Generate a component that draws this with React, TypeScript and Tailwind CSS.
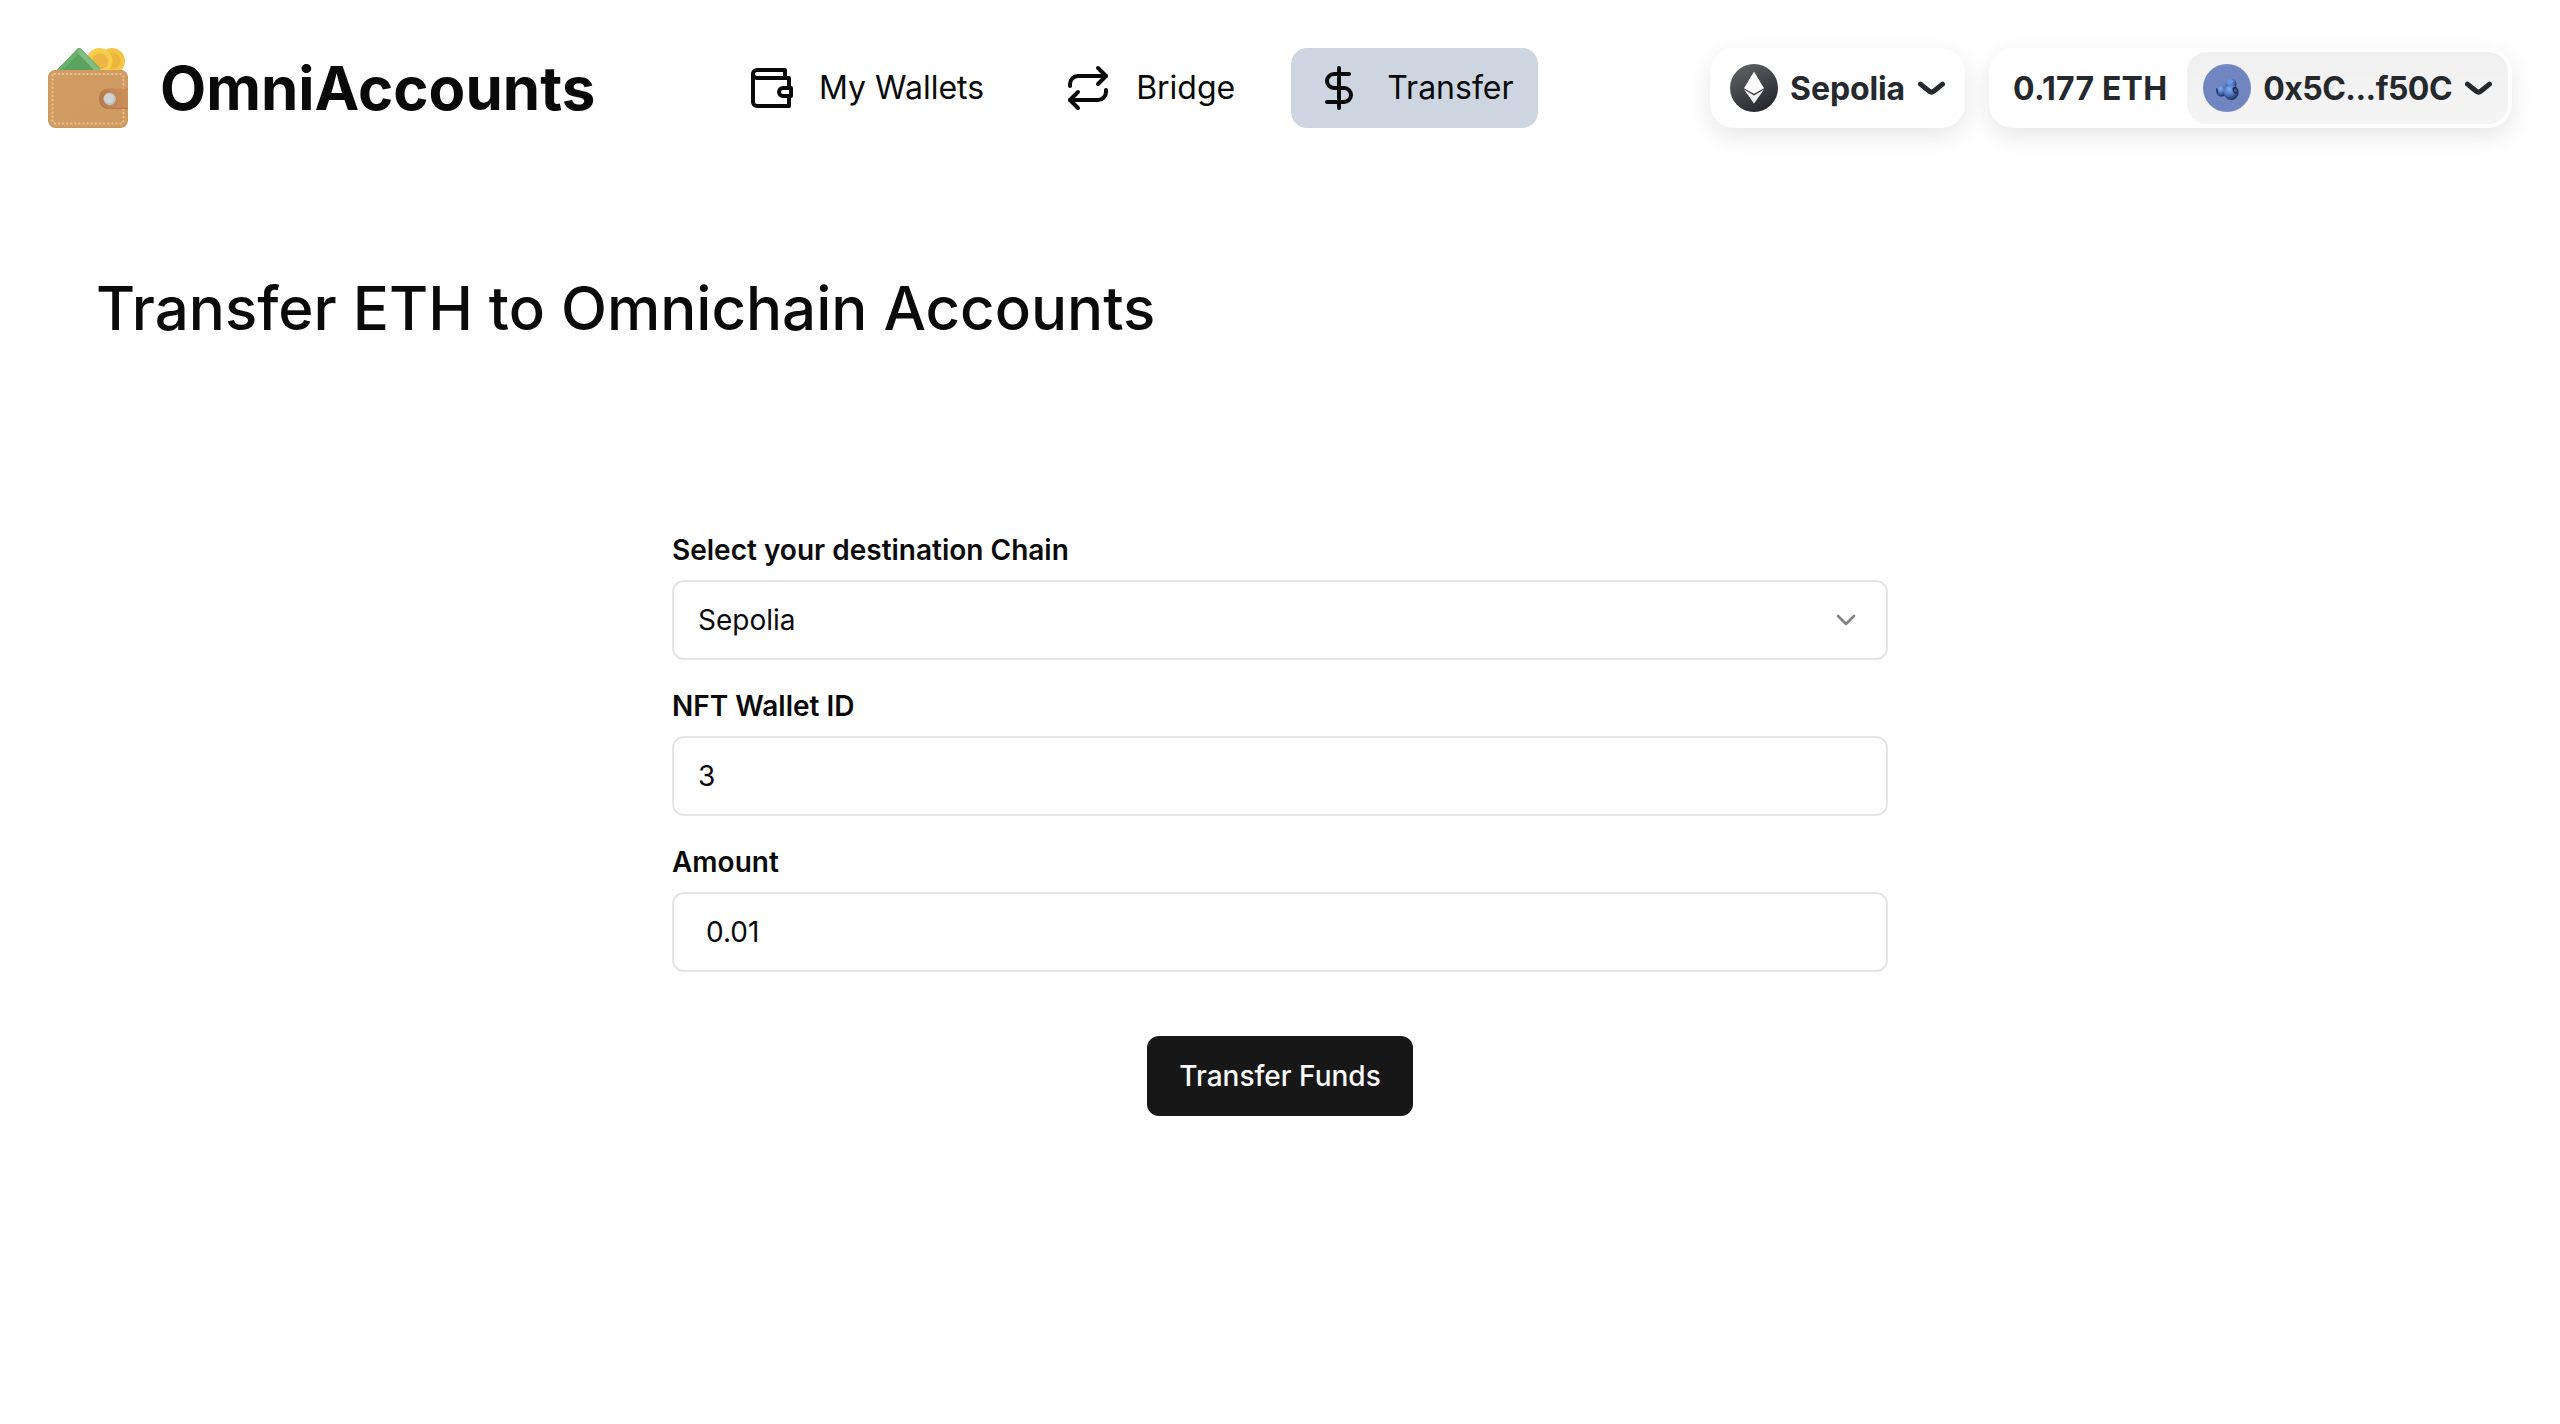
import type { ReactNode } from "react";
import { ChevronDown, DollarSign, Repeat } from "lucide-react";

function WalletLogo() {
  return (
    <svg className="h-20 w-20 shrink-0" viewBox="0 0 80 80" fill="none">
      <defs>
        <clipPath id="logo-clip">
          <rect width="80" height="80" />
        </clipPath>
        <linearGradient id="leather" x1="0" y1="0" x2="1" y2="1">
          <stop offset="0" stopColor="#d29d64" />
          <stop offset="1" stopColor="#cf9a62" />
        </linearGradient>
        <linearGradient id="strap" x1="0" y1="0" x2="1" y2="0">
          <stop offset="0" stopColor="#b57848" />
          <stop offset="0.45" stopColor="#c58754" />
          <stop offset="1" stopColor="#ca8e5a" />
        </linearGradient>
      </defs>
      <g clipPath="url(#logo-clip)">
        <circle cx="64" cy="13" r="13" fill="#f4c546" />
        <circle cx="64" cy="13" r="8.300" fill="#ecb63d" />
        <circle cx="51.500" cy="13" r="13" fill="#f8cd4c" />
        <circle cx="52" cy="13.500" r="8.300" fill="#ebb643" />
        <path d="M30.500 0L7 24H52L32 0Z" fill="#5aa45f" />
        <path d="M30.500 0L33 0.500L52 20V24H48L30.500 6L13 24H7L29 1Z" fill="#69b06d" />
        <path d="M31 0L51.500 21V24H48L30 5Z" fill="#84bd84" />
        <rect y="22" width="80" height="58" rx="7.500" fill="#c99561" />
        <rect x="0.500" y="22" width="79" height="57" rx="7" fill="url(#leather)" />
        <rect
          x="4.500"
          y="26"
          width="71"
          height="49.500"
          rx="2"
          stroke="#e8c294"
          strokeWidth="1.900"
          strokeDasharray="0.600 3.500"
          strokeLinecap="round"
        />
        <path d="M80 40.500H61C54.500 40.500 51 44.800 51 50.500C51 57 55 61 61 61H80Z" fill="url(#strap)" />
        <path d="M54 56C55.500 59.200 58 60.500 61 60.500H80" stroke="#b2774a" strokeWidth="1" />
        <circle cx="61.700" cy="51" r="6.200" fill="#bdbebf" />
        <circle cx="61" cy="50.500" r="4.900" fill="#d2d3d5" />
      </g>
    </svg>
  );
}

function WalletIcon() {
  return (
    <svg
      className="h-12 w-12 shrink-0"
      viewBox="0 0 24 24"
      fill="none"
      stroke="currentColor"
      strokeWidth="2"
      strokeLinecap="round"
      strokeLinejoin="round"
    >
      <path d="M21 12V7H5a2 2 0 0 1 0-4h14v4" />
      <path d="M3 5v14a2 2 0 0 0 2 2h16v-5" />
      <path d="M18 12a2 2 0 0 0 0 4h4v-4Z" />
    </svg>
  );
}

function EthIcon() {
  return (
    <svg className="h-12 w-12 shrink-0" viewBox="0 0 48 48" fill="none">
      <defs>
        <linearGradient id="eth-bg" x1="12" y1="2" x2="36" y2="46" gradientUnits="userSpaceOnUse">
          <stop stopColor="#5d5e62" />
          <stop offset="1" stopColor="#24272d" />
        </linearGradient>
      </defs>
      <circle cx="24" cy="24" r="24" fill="url(#eth-bg)" />
      <path d="M24 7.500L14 24.300L24 29.800L34 24.300Z" fill="#fff" />
      <path d="M14 25.600L24 39.500L34 25.600L24 31.400Z" fill="#f1f1f2" />
    </svg>
  );
}

function Avatar() {
  return (
    <svg className="h-12 w-12 shrink-0" viewBox="0 0 48 48" fill="none">
      <defs>
        <radialGradient id="berry" cx="0.38" cy="0.28" r="0.75">
          <stop offset="0" stopColor="#82aef0" />
          <stop offset="0.5" stopColor="#5179c6" />
          <stop offset="1" stopColor="#1d2850" />
        </radialGradient>
      </defs>
      <circle cx="24" cy="24" r="24" fill="#7185c1" />
      <circle cx="18.500" cy="27" r="5.500" fill="url(#berry)" />
      <ellipse cx="14.200" cy="27" rx="1" ry="3" fill="#2a3c70" transform="rotate(-12 14.200 27)" />
      <circle cx="28" cy="20" r="5.500" fill="url(#berry)" />
      <ellipse cx="27.500" cy="17.300" rx="2.700" ry="1" fill="#6d96dc" />
      <circle cx="28.200" cy="28.500" r="7.500" fill="url(#berry)" />
      <ellipse cx="32.300" cy="26.300" rx="2.500" ry="3.500" fill="#1c2748" transform="rotate(-22 32.300 26.300)" />
      <ellipse cx="32.500" cy="26.500" rx="1.300" ry="2" fill="#49659e" transform="rotate(-22 32.500 26.500)" />
    </svg>
  );
}

function DropdownIcon() {
  return (
    <svg className="h-[14px] w-7 shrink-0" viewBox="0 0 14 7" fill="none">
      <path
        d="M12.75 1.54001L8.51647 5.0038C7.77974 5.60658 6.72026 5.60658 5.98352 5.0038L1.75 1.54001"
        stroke="currentColor"
        strokeWidth="2.5"
        strokeLinecap="round"
        strokeLinejoin="round"
      />
    </svg>
  );
}

function NavItem({ icon, label, active = false }: { icon: ReactNode; label: string; active?: boolean }) {
  return (
    <a className={`flex h-20 items-center gap-6 rounded-2xl px-6 text-[32px] leading-[48px] ${active ? "bg-[#cdd5e1]" : ""}`}>
      {icon}
      <span>{label}</span>
    </a>
  );
}

function Field({ label, children }: { label: string; children: ReactNode }) {
  return (
    <div className="flex flex-col gap-4">
      <label className="text-[28px] leading-[28px] font-semibold">{label}</label>
      <div className="flex h-20 items-center justify-between rounded-xl border-2 border-[#e5e5e5] px-6 text-[28px] leading-10">
        {children}
      </div>
    </div>
  );
}

export default function App() {
  return (
    <div className="min-h-[1424px] bg-white font-['Inter',sans-serif] text-[#0a0a0a]">
      <header className="flex h-[176px] items-center px-12">
        <div className="flex w-[675px] items-center gap-8">
          <WalletLogo />
          <span className="text-[60px] leading-[72px] font-bold">OmniAccounts</span>
        </div>
        <nav className="flex items-center gap-8">
          <NavItem icon={<WalletIcon />} label="My Wallets" />
          <NavItem icon={<Repeat size={48} />} label="Bridge" />
          <NavItem icon={<DollarSign size={48} />} label="Transfer" active />
        </nav>
        <div className="ml-auto flex items-center gap-6 text-[32px] leading-[38px] font-bold text-[#25292e]">
          <button className="flex h-20 items-center gap-3 rounded-3xl bg-white px-5 shadow-[0_8px_24px_rgba(0,0,0,0.1)]">
            <EthIcon />
            <span className="pt-0.5 tracking-[-0.1px]">Sepolia</span>
            <DropdownIcon />
          </button>
          <button className="flex h-20 items-center rounded-3xl bg-white shadow-[0_8px_24px_rgba(0,0,0,0.1)]">
            <span className="pt-0.5 pr-5 pl-6 tracking-[0.2px]">0.177 ETH</span>
            <span className="mr-1 flex h-[72px] items-center gap-3 rounded-[20px] bg-linear-to-b from-black/[0.06] to-black/[0.04] px-4">
              <Avatar />
              <span className="pt-0.5 tracking-[-0.55px]">0x5C...f50C</span>
              <DropdownIcon />
            </span>
          </button>
        </div>
      </header>
      <main>
        <h1 className="px-24 pt-24 text-[60px] leading-[72px] font-medium">Transfer ETH to Omnichain Accounts</h1>
        <form className="mx-auto mt-48 flex w-[1216px] flex-col gap-8">
          <Field label="Select your destination Chain">
            <span>Sepolia</span>
            <ChevronDown size={32} className="opacity-50" />
          </Field>
          <Field label="NFT Wallet ID">
            <span>3</span>
          </Field>
          <Field label="Amount">
            <span className="pl-2">0.01</span>
          </Field>
          <button type="button" className="mt-8 h-20 self-center rounded-xl bg-[#171717] px-8 text-[28px] leading-10 font-medium text-[#fafafa]">
            Transfer Funds
          </button>
        </form>
      </main>
    </div>
  );
}
